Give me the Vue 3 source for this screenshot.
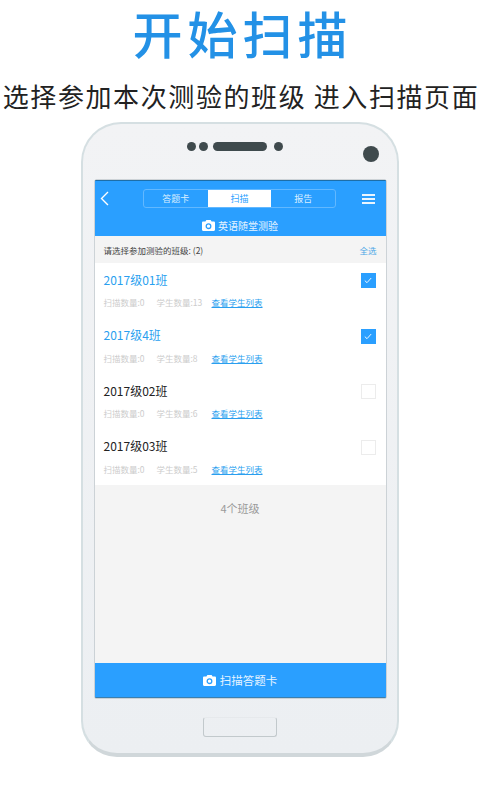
<template>
  <div class="page">
    <h1 class="title">开始扫描</h1>
    <p class="subtitle">选择参加本次测验的班级 进入扫描页面</p>

    <div class="phone">
      <div class="phone-top">
        <div class="speaker">
          <span class="dot"></span>
          <span class="dot"></span>
          <span class="grille"></span>
          <span class="dot small"></span>
        </div>
        <span class="lens"></span>
      </div>

      <div class="screen">
        <div class="top-bar">
          <div class="nav">
            <svg class="back" width="10" height="15" viewBox="0 0 10 15">
              <path d="M8 1 1.500 7.500 8 14" fill="none" stroke="#fff" stroke-width="1.4" />
            </svg>
            <div class="tabs">
              <span v-for="tab in tabs" :key="tab" class="tab" :class="{ active: tab === '扫描' }">{{ tab }}</span>
            </div>
            <div class="menu"><i></i><i></i><i></i></div>
          </div>
          <div class="exam">
            <svg class="camera" width="13" height="11" viewBox="0 0 13 11">
              <path d="M4.400 0h4.200l1 1.600h2.200c.6 0 1.200.5 1.200 1.200v7c0 .7-.6 1.200-1.200 1.200H1.200C.5 11 0 10.500 0 9.800v-7c0-.7.5-1.200 1.200-1.200h2.200z" fill="#fff" />
              <circle cx="6.500" cy="6.200" r="2.300" fill="none" stroke="#2a9fff" stroke-width="1.300" />
            </svg>
            英语随堂测验
          </div>
        </div>

        <div class="section-head">
          <span>请选择参加测验的班级: (2)</span>
          <span class="select-all">全选</span>
        </div>

        <ul class="class-list">
          <li v-for="item in classes" :key="item.name" class="class-row">
            <div class="row-main">
              <span class="class-name" :class="{ selected: item.checked }">{{ item.name }}</span>
              <span class="checkbox" :class="{ checked: item.checked }">
                <svg v-if="item.checked" width="8" height="7" viewBox="0 0 8 7">
                  <path d="M.8 3.600 3 5.700 7.200 1" fill="none" stroke="#fff" stroke-width=".9" />
                </svg>
              </span>
            </div>
            <div class="row-meta">
              <span class="scan-count">扫描数量:0</span>
              <span class="student-count">学生数量:{{ item.students }}</span>
              <a class="student-link">查看学生列表</a>
            </div>
          </li>
        </ul>

        <div class="list-foot">4个班级</div>

        <div class="scan-bar">
          <svg class="camera" width="13" height="11" viewBox="0 0 13 11">
            <path d="M4.400 0h4.200l1 1.600h2.200c.6 0 1.200.5 1.200 1.200v7c0 .7-.6 1.200-1.200 1.200H1.200C.5 11 0 10.500 0 9.800v-7c0-.7.5-1.200 1.200-1.200h2.200z" fill="#fff" />
            <circle cx="6.500" cy="6.200" r="2.300" fill="none" stroke="#2a9fff" stroke-width="1.300" />
          </svg>
          扫描答题卡
        </div>
      </div>

      <div class="phone-bottom">
        <span class="home-btn"></span>
      </div>
    </div>
  </div>
</template>

<script setup>
const tabs = ['答题卡', '扫描', '报告']

const classes = [
  { name: '2017级01班', students: 13, checked: true },
  { name: '2017级4班', students: 8, checked: true },
  { name: '2017级02班', students: 6, checked: false },
  { name: '2017级03班', students: 5, checked: false }
]
</script>

<style>
html,
body {
  margin: 0;
  background: #fff;
}
</style>

<style scoped>
.page {
  width: 480px;
  height: 800px;
  overflow: hidden;
  display: flex;
  flex-direction: column;
  align-items: center;
  background: #fff;
  font-family: "Noto Sans CJK SC", "Noto Sans", sans-serif;
}

.title {
  margin: 2px 0 0;
  padding-left: 5px;
  height: 60px;
  line-height: 60px;
  font-size: 50px;
  font-weight: 500;
  letter-spacing: 5px;
  color: #2391e6;
  white-space: nowrap;
}

.subtitle {
  margin: 14px 0 0;
  padding-left: 2px;
  height: 40px;
  line-height: 40px;
  font-size: 26px;
  font-weight: 400;
  letter-spacing: 1.600px;
  color: #222;
  white-space: nowrap;
}

.phone {
  margin-top: 6px;
  width: 318px;
  height: 635px;
  box-sizing: border-box;
  flex-shrink: 0;
  display: flex;
  flex-direction: column;
  align-items: center;
  background: linear-gradient(#f2f3f5, #eceff2);
  border: 2px solid #d5dfe2;
  border-bottom: 4px solid #d0d7da;
  border-radius: 40px 40px 36px 36px;
}

.phone-top {
  position: relative;
  width: 100%;
  height: 56px;
  flex-shrink: 0;
}

.speaker {
  display: flex;
  align-items: center;
  justify-content: center;
  gap: 3px;
  padding-top: 18px;
  margin-left: -10px;
}

.dot {
  width: 9px;
  height: 9px;
  border-radius: 50%;
  background: #3f4a4d;
}

.dot.small {
  margin-left: 4px;
}

.grille {
  width: 54px;
  height: 9px;
  margin-left: 2px;
  border-radius: 5px;
  background: #3f4a4d;
}

.lens {
  position: absolute;
  top: 22px;
  right: 18px;
  width: 16px;
  height: 16px;
  border-radius: 50%;
  background: #3f4a4d;
}

.screen {
  width: 291px;
  height: 518px;
  flex-shrink: 0;
  display: flex;
  flex-direction: column;
  background: #f4f4f4;
  border-radius: 1px;
  border-top: 1px solid #1d6ea8;
  border-bottom: 1px solid #3c7fae;
  box-sizing: border-box;
  box-shadow: 0 0 0 .5px #a9b4ba;
}

.top-bar {
  height: 55px;
  flex-shrink: 0;
  background: #2a9fff;
}

.nav {
  height: 35px;
  display: flex;
  align-items: center;
  justify-content: space-between;
  padding: 0 11px 0 5px;
}

.back {
  display: block;
}

.tabs {
  margin-left: 8px;
  width: 193px;
  height: 19px;
  box-sizing: border-box;
  display: grid;
  grid-template-columns: 1fr 1fr 1fr;
  border: 1px solid #62b8ff;
  border-radius: 3px;
}

.tab {
  font-size: 9px;
  line-height: 17px;
  text-align: center;
  color: #d8eeff;
}

.tab.active {
  background: #fff;
  color: #2a9fff;
}

.menu {
  width: 13px;
  display: flex;
  flex-direction: column;
  gap: 2px;
}

.menu i {
  display: block;
  height: 2px;
  background: #e9f5ff;
}

.exam,
.scan-bar {
  display: flex;
  align-items: center;
  justify-content: center;
  gap: 3px;
  color: #e6f4ff;
}

.exam {
  height: 18px;
  font-size: 10px;
}

.section-head {
  height: 27px;
  flex-shrink: 0;
  display: flex;
  align-items: center;
  justify-content: space-between;
  padding: 0 9px;
  font-size: 8.500px;
  color: #444;
}

.select-all {
  color: #4ba6e6;
}

.class-list {
  margin: 0;
  padding: 0;
  list-style: none;
  height: 222px;
  flex-shrink: 0;
  background: #fff;
}

.class-row {
  height: 55.500px;
  box-sizing: border-box;
  padding: 8px 10px 0 9px;
}

.row-main {
  height: 16px;
  display: flex;
  align-items: center;
  justify-content: space-between;
}

.class-name {
  font-size: 12px;
  color: #222;
}

.class-name.selected {
  color: #2a9fef;
}

.checkbox {
  width: 15px;
  height: 15px;
  margin-top: 3px;
  box-sizing: border-box;
  display: flex;
  align-items: center;
  justify-content: center;
  border: 1px solid #ececec;
}

.checkbox.checked {
  background: #2a9fff;
  border-color: #2a9fff;
}

.row-meta {
  margin-top: 8px;
  display: flex;
  font-size: 8.500px;
  line-height: 14px;
  color: #ccc;
}

.scan-count {
  width: 53px;
}

.student-count {
  width: 55px;
}

.student-link {
  color: #2a9fef;
  text-decoration: underline;
}

.list-foot {
  flex: 1;
  padding-top: 15px;
  text-align: center;
  font-size: 11px;
  line-height: 16px;
  color: #9a9a9a;
}

.scan-bar {
  height: 34px;
  flex-shrink: 0;
  background: #2a9fff;
  font-size: 11.500px;
  gap: 4px;
}

.phone-bottom {
  flex: 1;
  width: 100%;
  display: flex;
  justify-content: center;
  padding-top: 19px;
  box-sizing: border-box;
}

.home-btn {
  width: 74px;
  height: 20px;
  box-sizing: border-box;
  border: 1px solid #c2c9cc;
  border-top-color: #e6e9ec;
  border-radius: 3px;
}
</style>
